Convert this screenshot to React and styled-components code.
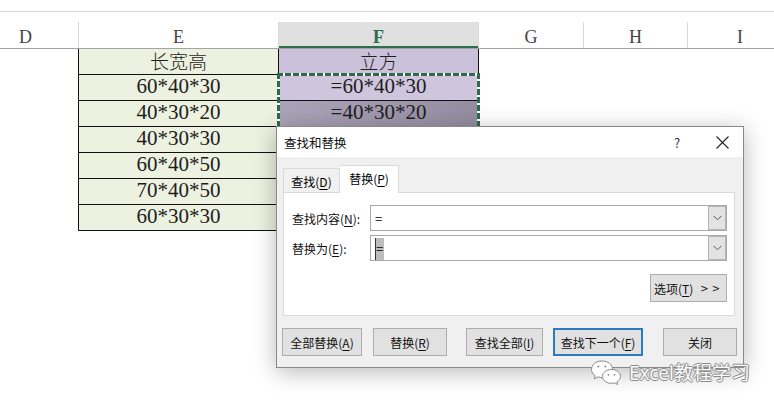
import React from 'react';
import styled, { createGlobalStyle } from 'styled-components';

const Global = createGlobalStyle`
  html, body { margin: 0; padding: 0; background: #fff; }
  body { width: 774px; height: 406px; overflow: hidden; }
`;

const Page = styled.div`
  position: relative;
  width: 774px;
  height: 406px;
  overflow: hidden;
  background: #fff;
`;

const FormulaEdge = styled.div`
  height: 11px;
  border-bottom: 1px solid #d4d4d4;
`;

const Sheet = styled.div`
  margin-top: 10px;
  margin-left: -27px;
  display: flex;
  flex-direction: column;
`;

const HeaderRow = styled.div`
  display: flex;
  height: 27px;
  box-sizing: border-box;
  border-bottom: 1px solid #a3a3a3;
`;

const HeaderCell = styled.div`
  width: ${p => p.$w}px;
  flex: none;
  box-sizing: border-box;
  border-left: ${p => (p.$first ? 'none' : '1px solid #d9d9d9')};
  background: ${p => (p.$sel ? '#e0e0e0' : '#fff')};
  box-shadow: ${p => (p.$sel ? 'inset 0 -2px 0 #2b6e4a' : 'none')};
  color: ${p => (p.$sel ? '#2b6e4a' : '#444')};
  font-weight: ${p => (p.$sel ? 700 : 400)};
  font-family: "Liberation Serif", "DejaVu Serif", serif;
  font-size: 18px;
  display: flex;
  align-items: flex-end;
  justify-content: center;
  padding-bottom: 0;
`;

const BodyRow = styled.div`
  display: flex;
  height: 26px;
`;

const Spacer = styled.div`
  width: ${p => p.$w}px;
  flex: none;
`;

const Cell = styled.div`
  width: ${p => p.$w}px;
  flex: none;
  box-sizing: border-box;
  border-left: 1px solid #111;
  border-right: ${p => (p.$last ? '1px solid #111' : 'none')};
  border-bottom: 1px solid #111;
  background: ${p => p.$bg};
  color: #1e1e1e;
  font-family: ${p => (p.$cjk
    ? '"Noto Sans CJK SC", "Noto Sans", sans-serif'
    : '"Liberation Serif", "DejaVu Serif", serif')};
  font-size: ${p => (p.$cjk ? 19 : 21)}px;
  font-weight: ${p => (p.$cjk ? 300 : 400)};
  line-height: 20px;
  display: flex;
  align-items: center;
  justify-content: center;
  padding-bottom: ${p => (p.$cjk ? 1 : 3)}px;
`;

const Ants = styled.div`
  position: absolute;
  left: 277px;
  top: 73px;
  width: 203px;
  height: 158px;
  box-sizing: border-box;
  pointer-events: none;
  background:
    repeating-linear-gradient(90deg, #2d6b4b 0 6px, #fff 6px 8px) top left / 100% 3px no-repeat,
    repeating-linear-gradient(90deg, #2d6b4b 0 6px, #fff 6px 8px) bottom left / 100% 3px no-repeat,
    repeating-linear-gradient(180deg, #2d6b4b 0 6px, #fff 6px 8px) top left / 3px 100% no-repeat,
    repeating-linear-gradient(180deg, #2d6b4b 0 6px, #fff 6px 8px) top right / 3px 100% no-repeat;
`;

const Dialog = styled.div`
  position: absolute;
  left: 276px;
  top: 126px;
  width: 468px;
  height: 242px;
  box-sizing: border-box;
  border: 1px solid #8a8a8a;
  background: #f0f0f0;
  box-shadow: 0 4px 22px rgba(0, 0, 0, 0.28);
  display: flex;
  flex-direction: column;
  font-family: "Noto Sans CJK SC", "Noto Sans", sans-serif;
  font-size: 12px;
  color: #000;
`;

const TitleBar = styled.div`
  height: 30px;
  background: #fff;
  display: flex;
  align-items: center;
  padding-left: 7px;
`;

const Title = styled.div`
  flex: 1;
  font-size: 12.5px;
  color: #111;
`;

const Help = styled.div`
  width: 24px;
  text-align: center;
  font-size: 13px;
  color: #333;
  margin-right: 18px;
`;

const Close = styled.div`
  width: 30px;
  display: flex;
  justify-content: center;
  margin-right: 6px;
`;

const Body = styled.div`
  padding: 9px 8px 0 6px;
  display: flex;
  flex-direction: column;
`;

const Tabs = styled.div`
  display: flex;
  align-items: flex-end;
  height: 27px;
  position: relative;
  z-index: 1;
  margin-bottom: -1px;
`;

const Tab = styled.div`
  width: ${p => p.$w}px;
  height: ${p => (p.$active ? 28 : 25)}px;
  box-sizing: border-box;
  border: 1px solid #d9d9d9;
  border-bottom: ${p => (p.$active ? 'none' : '1px solid #d9d9d9')};
  border-left: ${p => (p.$active ? 'none' : '1px solid #d9d9d9')};
  background: ${p => (p.$active ? '#fff' : '#f0f0f0')};
  display: flex;
  align-items: center;
  justify-content: center;
  padding-top: ${p => (p.$active ? 0 : 2)}px;
  padding-bottom: ${p => (p.$active ? 2 : 0)}px;
  white-space: nowrap;
`;

const U = styled.span`
  text-decoration: underline;
  text-underline-offset: 2px;
`;

const Panel = styled.div`
  height: 124px;
  box-sizing: border-box;
  background: #fff;
  border: 1px solid #d9d9d9;
  padding: 12px 7px 0 0;
  display: flex;
  flex-direction: column;
  gap: 4px;
`;

const FieldRow = styled.div`
  display: flex;
  align-items: center;
  height: 26px;
`;

const Label = styled.div`
  width: 78px;
  padding-left: 8px;
  flex: none;
  color: #111;
  white-space: nowrap;
`;

const Combo = styled.div`
  width: 360px;
  height: 26px;
  box-sizing: border-box;
  border: 1px solid #a8a8a8;
  background: #fff;
  display: flex;
  align-items: center;
  padding-left: 4px;
  font-size: 13px;
`;

const ComboText = styled.div`
  flex: 1;
`;

const Sel = styled.span`
  background: #bdbdbd;
  border-left: 1px solid #333;
  padding: 1px 1px 2px 0;
`;

const DropBtn = styled.div`
  width: 18px;
  height: 24px;
  box-sizing: border-box;
  border: 1px solid #b5b5b5;
  background: #e3e3e3;
  display: flex;
  align-items: center;
  justify-content: center;
`;

const OptRow = styled.div`
  display: flex;
  justify-content: flex-end;
  margin-top: 9px;
`;

const Btn = styled.div`
  width: ${p => p.$w}px;
  height: 28px;
  flex: none;
  margin-left: ${p => p.$ml || 0}px;
  box-sizing: border-box;
  border: ${p => (p.$focus ? '2px solid #2a7bbf' : '1px solid #adadad')};
  background: #e1e1e1;
  display: flex;
  align-items: center;
  justify-content: center;
  color: #111;
  white-space: nowrap;
`;

const BtnRow = styled.div`
  display: flex;
  margin-top: 12px;
  margin-left: -1px;
`;

const Arrows = styled.span`
  margin-left: 7px;
  font-size: 10px;
  letter-spacing: 3px;
  font-family: "DejaVu Sans", sans-serif;
`;

const Watermark = styled.div`
  position: absolute;
  left: 590px;
  top: 359px;
  display: flex;
  align-items: center;
  gap: 7px;
`;

const WmText = styled.div`
  font-family: "Noto Sans", "Noto Sans CJK SC", sans-serif;
  font-size: 19px;
  line-height: 26px;
  color: #fbfbfb;
  text-shadow: 1px 0 0 #8a8a8a, -1px 0 0 #8a8a8a, 0 1px 0 #8a8a8a, 0 -1px 0 #8a8a8a;
`;

const rows = [
  { e: '长宽高', f: '立方', cjk: true, fbg: '#ccc1da' },
  { e: '60*40*30', f: '=60*40*30', fbg: '#cfc6dd' },
  { e: '40*30*20', f: '=40*30*20', fbg: 'linear-gradient(90deg, #aba3b8, #958da1)' },
  { e: '40*30*30', f: '=40*30*30', fbg: '#aaa2b7' },
  { e: '60*40*50', f: '=60*40*50', fbg: '#aaa2b7' },
  { e: '70*40*50', f: '=70*40*50', fbg: '#aaa2b7' },
  { e: '60*30*30', f: '=60*30*30', fbg: '#aaa2b7' },
];

const cols = [
  { k: 'D', w: 105 },
  { k: 'E', w: 200 },
  { k: 'F', w: 200, sel: true },
  { k: 'G', w: 105 },
  { k: 'H', w: 104 },
  { k: 'I', w: 105 },
];

const Chevron = () => (
  <svg width="9" height="6" viewBox="0 0 9 6">
    <polyline points="0.5,0.8 4.5,4.8 8.5,0.8" fill="none" stroke="#555" strokeWidth="1" />
  </svg>
);

const XIcon = () => (
  <svg width="13" height="13" viewBox="0 0 13 13">
    <line x1="0.5" y1="0.5" x2="12.5" y2="12.5" stroke="#222" strokeWidth="1.1" />
    <line x1="12.5" y1="0.5" x2="0.5" y2="12.5" stroke="#222" strokeWidth="1.1" />
  </svg>
);

const WeChat = () => (
  <svg width="32" height="27" viewBox="0 0 32 27">
    <g fill="#fff" stroke="#8a8a8a" strokeWidth="1">
      <path d="M12 2 C5.5 2 1.5 6 1.5 10.5 C1.5 13.2 3 15.4 5.2 16.8 L4.3 19.8 L8 17.9 C9.3 18.3 10.6 18.5 12 18.5 C18.5 18.5 22.5 14.8 22.5 10.3 C22.5 5.8 18.5 2 12 2 Z" />
      <path d="M21.5 10.5 C16.3 10.5 12.5 13.6 12.5 17.4 C12.5 21.2 16.3 24.3 21.5 24.3 C22.6 24.3 23.6 24.2 24.6 23.9 L27.6 25.5 L26.9 22.8 C28.9 21.6 30.5 19.6 30.5 17.4 C30.5 13.6 26.7 10.5 21.5 10.5 Z" />
    </g>
    <g fill="#8a8a8a">
      <circle cx="8.3" cy="7.5" r="1" />
      <circle cx="15.3" cy="7.5" r="1" />
      <circle cx="18.5" cy="15.8" r="0.9" />
      <circle cx="24.5" cy="15.8" r="0.9" />
    </g>
  </svg>
);

export default function App() {
  return (
    <Page>
      <Global />
      <FormulaEdge />
      <Sheet>
        <HeaderRow>
          {cols.map((c, i) => (
            <HeaderCell key={c.k} $w={c.w} $sel={c.sel} $first={i === 0}>{c.k}</HeaderCell>
          ))}
        </HeaderRow>
        {rows.map((r, i) => (
          <BodyRow key={i}>
            <Spacer $w={105} />
            <Cell $w={200} $bg="#ecf1e0" $cjk={r.cjk}>{r.e}</Cell>
            <Cell $w={201} $bg={r.fbg} $cjk={r.cjk} $last>{r.f}</Cell>
          </BodyRow>
        ))}
      </Sheet>
      <Ants />
      <Dialog>
        <TitleBar>
          <Title>查找和替换</Title>
          <Help>?</Help>
          <Close><XIcon /></Close>
        </TitleBar>
        <Body>
          <Tabs>
            <Tab $w={57}>查找(<U>D</U>)</Tab>
            <Tab $w={59} $active>替换(<U>P</U>)</Tab>
          </Tabs>
          <Panel>
            <FieldRow>
              <Label>查找内容(<U>N</U>):</Label>
              <Combo>
                <ComboText>=</ComboText>
                <DropBtn><Chevron /></DropBtn>
              </Combo>
            </FieldRow>
            <FieldRow>
              <Label>替换为(<U>E</U>):</Label>
              <Combo>
                <ComboText><Sel>=</Sel></ComboText>
                <DropBtn><Chevron /></DropBtn>
              </Combo>
            </FieldRow>
            <OptRow>
              <Btn $w={77}>选项(<U>T</U>)<Arrows>&gt;&gt;</Arrows></Btn>
            </OptRow>
          </Panel>
          <BtnRow>
            <Btn $w={80}>全部替换(<U>A</U>)</Btn>
            <Btn $w={74} $ml={11}>替换(<U>R</U>)</Btn>
            <Btn $w={77} $ml={19}>查找全部(<U>I</U>)</Btn>
            <Btn $w={90} $ml={10} $focus>查找下一个(<U>F</U>)</Btn>
            <Btn $w={74} $ml={20}>关闭</Btn>
          </BtnRow>
        </Body>
      </Dialog>
      <Watermark>
        <WeChat />
        <WmText>Excel教程学习</WmText>
      </Watermark>
    </Page>
  );
}
